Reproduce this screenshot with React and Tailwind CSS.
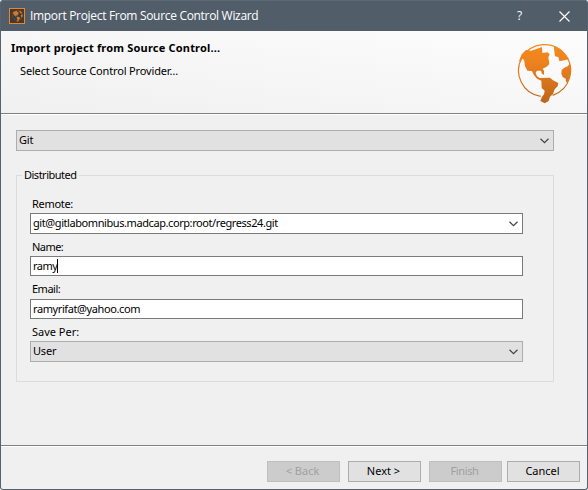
import React from "react";

const LAND = [
  "M674 186L683 163 696 150 712 152 744 141 745 159 760 157 767 163 763 172 765 184 766 192 758 200 746 206 750 212 750 224 744 222 741 212 729 212 725 218 728 227 736 234 768 233 777 241 793 249 791 259 782 268 777 282 768 290 764 303 752 310 739 303 744 290 750 283 752 272 743 264 742 242 729 236 719 224 714 213 700 212 693 198 690 179 685 176Z",
  "M779 137L798 146 813 161 825 177 811 181 796 184 793 171 783 169Z",
  "M828 190L830 211 827 230 820 248 816 245 815 236 806 231 802 221 803 210 811 203 821 199Z",
];

function Globe({ className }) {
  return (
    <svg className={className} viewBox="669 129 165 183" aria-hidden="true">
      <defs>
        <linearGradient id="globe" x1="0" y1="131" x2="0" y2="309" gradientUnits="userSpaceOnUse">
          <stop offset="0" stopColor="#f58a1f" />
          <stop offset="0.3" stopColor="#ee821e" />
          <stop offset="1" stopColor="#bd651b" />
        </linearGradient>
      </defs>
      <path d="M740 289A78 78 0 1 1 776 286" fill="none" stroke="url(#globe)" strokeWidth="3.6" />
      <g fill="url(#globe)">
        {LAND.map((d) => (
          <path key={d} d={d} />
        ))}
      </g>
    </svg>
  );
}

function AppIcon() {
  return (
    <div className="flex h-4 w-4 items-center justify-center border border-[#f5821f] bg-[#3c3c3d]">
      <svg className="h-3 w-[11px]" viewBox="669 129 165 183" fill="#d97a24" aria-hidden="true">
        <circle cx="751" cy="211" r="76" fill="none" stroke="#8a5530" strokeWidth="8" />
        {LAND.map((d) => (
          <path key={d} d={d} />
        ))}
      </svg>
    </div>
  );
}

function Chevron() {
  return (
    <svg className="h-[6px] w-[9px]" viewBox="0 0 9 6" fill="none" stroke="#444" strokeWidth="1.2" aria-hidden="true">
      <path d="M0.500 0.800L4.500 4.600 8.500 0.800" />
    </svg>
  );
}

function Select({ value, light }) {
  return (
    <div
      className={
        "flex h-[21px] items-center justify-between border pr-1 pl-[2px] " +
        (light ? "border-[#7a7a7a] bg-white tracking-[-0.42px]" : "border-[#adadad] bg-[#e1e1e1] tracking-[-0.2px]")
      }
    >
      {value}
      <Chevron />
    </div>
  );
}

function Label({ children, className = "tracking-[-0.3px]" }) {
  return <div className={"pl-[2px] leading-[14px] " + className}>{children}</div>;
}

function Button({ children, disabled, className = "" }) {
  return (
    <button
      disabled={disabled}
      className={
        "flex h-[21px] w-[73px] items-center justify-center border pr-[2px] " +
        (disabled ? "border-[#bfbfbf] bg-[#cccccc] text-[#a0a0a0] " : "border-[#adadad] bg-[#e1e1e1] ") +
        className
      }
    >
      {children}
    </button>
  );
}

export default function App() {
  return (
    <div className="h-[490px] w-[588px] overflow-hidden bg-white">
      <div className="flex h-[490px] w-[588px] flex-col overflow-hidden rounded-[3px] border border-t-0 border-[#566270] bg-[#f0f0f0] font-['Noto_Sans',sans-serif] text-[11px] whitespace-nowrap text-black">
        <header className="flex h-[31px] shrink-0 items-center border-t border-[#5e6976] bg-[#525d6a] pl-2 text-white">
          <AppIcon />
          <span className="ml-[5px] font-['Open_Sans',sans-serif] text-[12px] tracking-[-0.31px]">Import Project From Source Control Wizard</span>
          <span className="ml-auto w-[7px] text-center font-['Open_Sans',sans-serif] text-[12px]">?</span>
          <svg className="mr-[17px] ml-[36px] h-[11px] w-[11px]" viewBox="0 0 11 11" stroke="white" strokeWidth="1.1" aria-hidden="true">
            <path d="M0.500 0.500L10.500 10.500M10.500 0.500L0.500 10.500" />
          </svg>
        </header>

        <section className="flex h-[82px] shrink-0 justify-between bg-linear-to-tr from-[#f0f0f0] to-[#fdfdfd] pl-[10px]">
          <div className="pt-[10px]">
            <h1 className="leading-[14px] font-bold tracking-[0.19px]">Import project from Source Control...</h1>
            <p className="mt-[9px] ml-[9px] leading-[14px] tracking-[-0.16px]">Select Source Control Provider…</p>
          </div>
          <Globe className="mt-3 mr-[15px] h-[61px] w-[55px]" />
        </section>

        <main className="h-[332px] shrink-0 border-t border-[#808080] pt-4 pr-[33px] pl-[15px] shadow-[inset_0_1px_0_#ffffff]">
          <Select value="Git" />
          <div className="mt-[17px] flex h-[14px] items-center">
            <div className="h-px w-[6px] bg-[#dcdcdc]" />
            <span className="w-[57px] pl-[2px] leading-[14px] tracking-[-0.5px]">Distributed</span>
            <div className="h-px flex-1 bg-[#dcdcdc]" />
          </div>
          <div className="-mt-[7px] h-[207px] border border-t-0 border-[#dcdcdc] pt-[22px] pr-[30px] pl-[13px]">
            <Label>Remote:</Label>
            <div className="mt-[2px]">
              <Select value="git@gitlabomnibus.madcap.corp:root/regress24.git" light />
            </div>
            <div className="mt-[6px]"><Label className="tracking-[-0.55px]">Name:</Label></div>
            <div className="mt-[2px] flex h-5 items-center border border-[#7a7a7a] bg-white pl-[2px] tracking-[-0.5px]">
              ramy
              <span className="h-[14px] w-px bg-black" />
            </div>
            <div className="mt-[6px]"><Label className="tracking-[-0.5px]">Email:</Label></div>
            <div className="mt-[3px] flex h-5 items-center border border-[#7a7a7a] bg-white pl-[2px] tracking-[-0.4px]">ramyrifat@yahoo.com</div>
            <div className="mt-[6px]"><Label className="tracking-normal">Save Per:</Label></div>
            <div className="mt-[2px]">
              <Select value="User" />
            </div>
          </div>
        </main>

        <footer className="flex flex-1 items-start justify-end border-t border-[#808080] pt-[15px] pr-[7px] shadow-[inset_0_1px_0_#ffffff]">
          <Button disabled>&lt; Back</Button>
          <Button className="ml-2">Next &gt;</Button>
          <Button disabled className="ml-2 tracking-[-0.4px]">Finish</Button>
          <Button className="ml-[5px]">Cancel</Button>
        </footer>
      </div>
    </div>
  );
}
